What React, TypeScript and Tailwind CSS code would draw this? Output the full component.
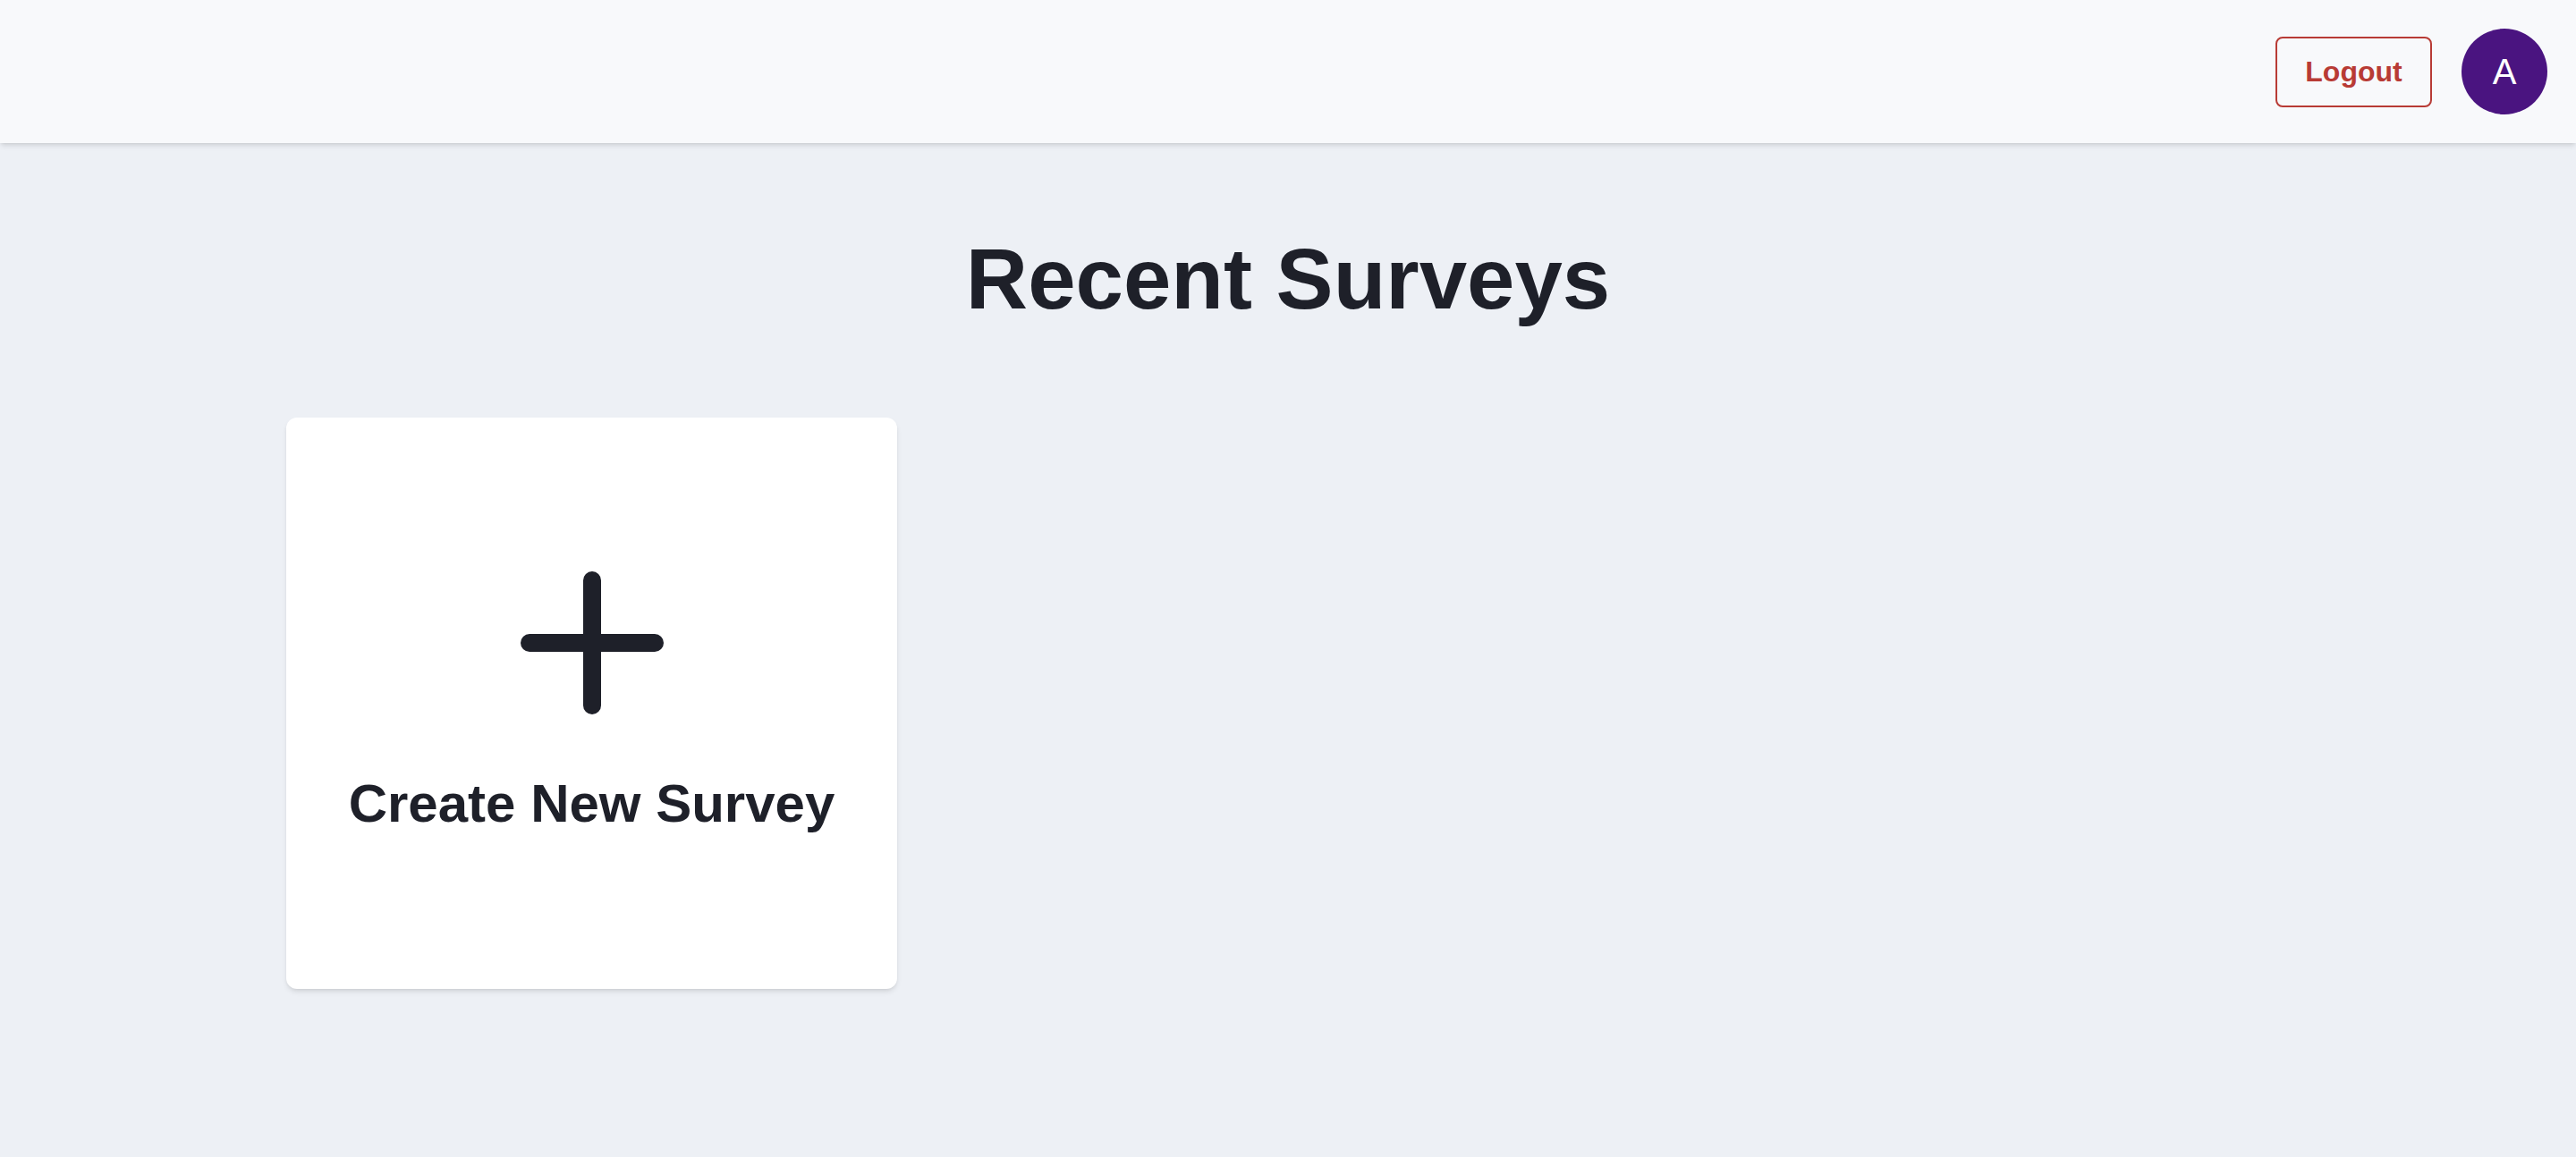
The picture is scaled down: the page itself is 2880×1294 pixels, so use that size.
import { Plus } from "lucide-react";

export default function App() {
  return (
    <div
      className="min-h-screen w-full bg-[#edf0f5] text-[#1e2029]"
      style={{ fontFamily: '"Liberation Sans", Arial, sans-serif' }}
    >
      <header className="flex h-[160px] items-center justify-end gap-[33px] bg-[#f8f9fb] pr-[32px] shadow-md">
        <button className="flex h-[79px] w-[175px] items-center justify-center rounded-lg border-2 border-[#b83b35] text-[32px] font-bold text-[#b83b35]">
          Logout
        </button>
        <div className="flex h-[96px] w-[96px] items-center justify-center rounded-full bg-[#4a1480] text-[40px] text-white">
          A
        </div>
      </header>

      <main className="pt-[104px]">
        <h1 className="text-center text-[96px] leading-none font-bold">Recent Surveys</h1>

        <div className="mt-[107px] grid grid-cols-[683px] px-[320px]">
          <div className="flex h-[639px] flex-col items-center rounded-xl bg-white pt-[132px] shadow-md">
            <Plus size={240} strokeWidth={2} color="#1e2029" />
            <p className="mt-[30px] text-[60px] leading-none font-bold">Create New Survey</p>
          </div>
        </div>
      </main>
    </div>
  );
}
